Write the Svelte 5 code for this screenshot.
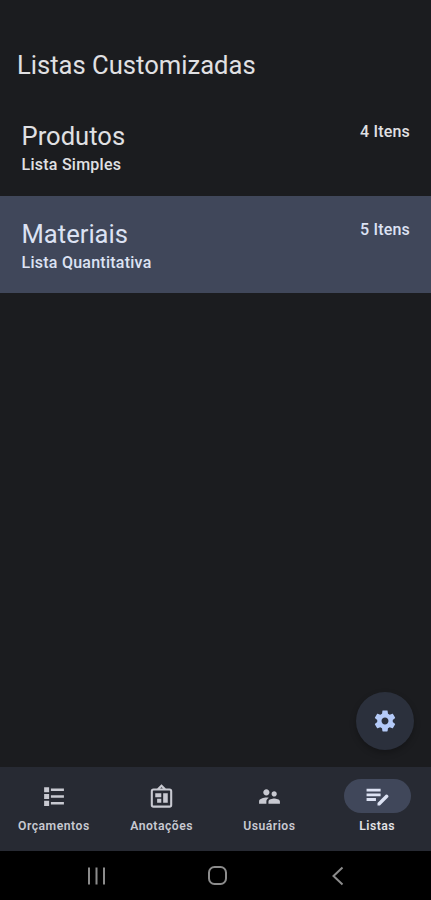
<script lang="ts">
  let selected = $state('Materiais');
  let activeTab = $state('Listas');

  const lists = [
    { name: 'Produtos', kind: 'Lista Simples', count: 4 },
    { name: 'Materiais', kind: 'Lista Quantitativa', count: 5 }
  ];

  const tabs = [
    { label: 'Orçamentos', icon: 'budget' },
    { label: 'Anotações', icon: 'notes' },
    { label: 'Usuários', icon: 'users' },
    { label: 'Listas', icon: 'lists' }
  ];
</script>

<div class="screen">
  <header>
    <h1>Listas Customizadas</h1>
  </header>

  <main>
    {#each lists as list}
      <button class="row" class:selected={selected === list.name} onclick={() => (selected = list.name)}>
        <span class="info">
          <span class="name">{list.name}</span>
          <span class="kind">{list.kind}</span>
        </span>
        <span class="count">{list.count} Itens</span>
      </button>
    {/each}

    <button class="fab" aria-label="Configurações">
      <svg viewBox="0 0 24 24" width="26" height="26">
        <path d="M19.14 12.94c.04-.3.06-.61.06-.94 0-.32-.02-.64-.07-.94l2.03-1.58c.18-.14.23-.41.12-.61l-1.92-3.32c-.12-.22-.37-.29-.59-.22l-2.39.96c-.5-.38-1.03-.7-1.62-.94l-.36-2.54c-.04-.24-.24-.41-.48-.41h-3.84c-.24 0-.43.17-.47.41l-.36 2.54c-.59.24-1.13.57-1.62.94l-2.39-.96c-.22-.08-.47 0-.59.22L2.74 8.87c-.12.21-.08.47.12.61l2.03 1.58c-.05.3-.09.63-.09.94s.02.64.07.94l-2.03 1.58c-.18.14-.23.41-.12.61l1.92 3.32c.12.22.37.29.59.22l2.39-.96c.5.38 1.03.7 1.62.94l.36 2.54c.05.24.24.41.48.41h3.84c.24 0 .44-.17.47-.41l.36-2.54c.59-.24 1.13-.56 1.62-.94l2.39.96c.22.08.47 0 .59-.22l1.92-3.32c.12-.22.07-.47-.12-.61l-2.01-1.58zM12 15.2c-1.8 0-3.2-1.4-3.2-3.2s1.4-3.2 3.2-3.2 3.2 1.4 3.2 3.2-1.4 3.2-3.2 3.2z" />
      </svg>
    </button>
  </main>

  <nav>
    {#each tabs as tab}
      <button class="tab" class:active={activeTab === tab.label} onclick={() => (activeTab = tab.label)}>
        <span class="pill">
          <svg viewBox="0 0 24 24" width="25" height="25">
            {#if tab.icon === 'budget'}
              <path d="M3 3h4.8v5H3zM3 9.5h4.8v5H3zM3 16h4.8v5H3zM9.5 4.4H22v2.3H9.5zM9.5 10.8H22v2.3H9.5zM9.5 17.3H22v2.3H9.500z" />
            {:else if tab.icon === 'notes'}
              <path class="line" d="M4.3 5.3h15.4q1.6 0 1.600 1.600v13.200q0 1.600-1.600 1.600H4.300q-1.600 0-1.600-1.600V6.900q0-1.600 1.600-1.600zM8.300 5.300L12 1.600l3.700 3.700" />
              <path d="M6 8.800h5.800v4H6zM13.600 8.800H18v9.200h-4.400zM7.800 14.200h4v3.800h-4z" />
            {:else if tab.icon === 'users'}
              <path d="M16.5 12c1.380 0 2.490-1.120 2.490-2.500S17.880 7 16.500 7C15.120 7 14 8.120 14 9.500s1.120 2.500 2.500 2.500zM9 11c1.660 0 2.990-1.340 2.990-3S10.660 5 9 5C7.340 5 6 6.340 6 8s1.340 3 3 3zm7.500 3c-1.830 0-5.500.920-5.500 2.750V19h11v-2.250c0-1.830-3.670-2.750-5.500-2.750zM9 13c-2.330 0-7 1.170-7 3.500V19h7v-2.250c0-.850.330-2.340 2.370-3.470C10.500 13.100 9.660 13 9 13z" />
            {:else}
              <path d="M1.500 4.500H15v2.700H1.500zM1.500 9H15v2.700H1.500zM1.500 13.500h9v2.700h-9z" />
              <path d="M12 18.300l7.900-7.900q.8-.8 1.600 0l.7.700q.8.800 0 1.600l-7.900 7.900H12z" />
            {/if}
          </svg>
        </span>
        <span class="label">{tab.label}</span>
      </button>
    {/each}
  </nav>

  <footer>
    <svg viewBox="0 0 20 20" width="20" height="20"><path d="M2 1.500v17M9.500 1.500v17M17 1.500v17" /></svg>
    <svg viewBox="0 0 20 20" width="20" height="20"><rect x="1" y="1" width="17" height="17" rx="5.500" /></svg>
    <svg viewBox="0 0 20 20" width="20" height="20"><path d="M14.500 1.500L5.500 10l9 8.500" /></svg>
  </footer>
</div>

<style>
  :global(body) {
    margin: 0;
    background: #1b1c1f;
  }

  .screen {
    display: flex;
    flex-direction: column;
    height: 900px;
    background: #1b1c1f;
    color: #e0e0e3;
    font-family: Roboto, sans-serif;
  }

  button {
    border: none;
    padding: 0;
    background: none;
    color: inherit;
    font: inherit;
    text-align: left;
  }

  header {
    height: 98px;
    box-sizing: border-box;
    padding: 49px 17px 0;
  }

  h1 {
    margin: 0;
    font-size: 25.6px;
    font-weight: 400;
    line-height: 32px;
  }

  main {
    position: relative;
    flex: 1;
  }

  .row {
    display: flex;
    justify-content: space-between;
    align-items: flex-start;
    box-sizing: border-box;
    width: 100%;
    height: 97.5px;
    padding: 22px 21px 0 21.5px;
  }

  .row.selected {
    background: #40475a;
    color: #dce2f3;
  }

  .info {
    display: flex;
    flex-direction: column;
  }

  .name {
    font-size: 25.6px;
    line-height: 32px;
  }

  .kind {
    font-size: 16px;
    font-weight: 500;
    line-height: 25px;
    letter-spacing: 0.25px;
  }

  .count {
    margin-top: 2px;
    font-size: 16px;
    font-weight: 500;
    line-height: 20px;
    letter-spacing: 0.2px;
  }

  .fab {
    position: absolute;
    right: 17px;
    bottom: 17.5px;
    display: flex;
    align-items: center;
    justify-content: center;
    width: 58px;
    height: 58px;
    border-radius: 50%;
    background: #2b303c;
    box-shadow: 0 3px 6px rgba(0, 0, 0, 0.25);
    fill: #b4caf8;
  }

  nav {
    display: flex;
    height: 84px;
    background: #272a33;
  }

  .tab {
    flex: 1;
    display: flex;
    flex-direction: column;
    align-items: center;
    padding-top: 12px;
    color: #c8c9d1;
  }

  .tab.active {
    color: #e2e2e6;
  }

  .pill {
    display: flex;
    align-items: center;
    justify-content: center;
    width: 67px;
    height: 34px;
    border-radius: 17px;
    fill: currentColor;
  }

  .active .pill {
    background: #40475a;
    fill: #dce2f3;
  }

  .line {
    fill: none;
    stroke: currentColor;
    stroke-width: 2;
  }

  .label {
    margin-top: 5px;
    font-size: 12.2px;
    font-weight: 600;
    line-height: 16px;
    letter-spacing: 0.5px;
  }

  footer {
    display: flex;
    justify-content: space-between;
    align-items: center;
    box-sizing: border-box;
    height: 49px;
    padding: 0 83px 0 87px;
    background: #000;
  }

  footer svg {
    fill: none;
    stroke: #8c8c8c;
    stroke-width: 2;
  }
</style>
